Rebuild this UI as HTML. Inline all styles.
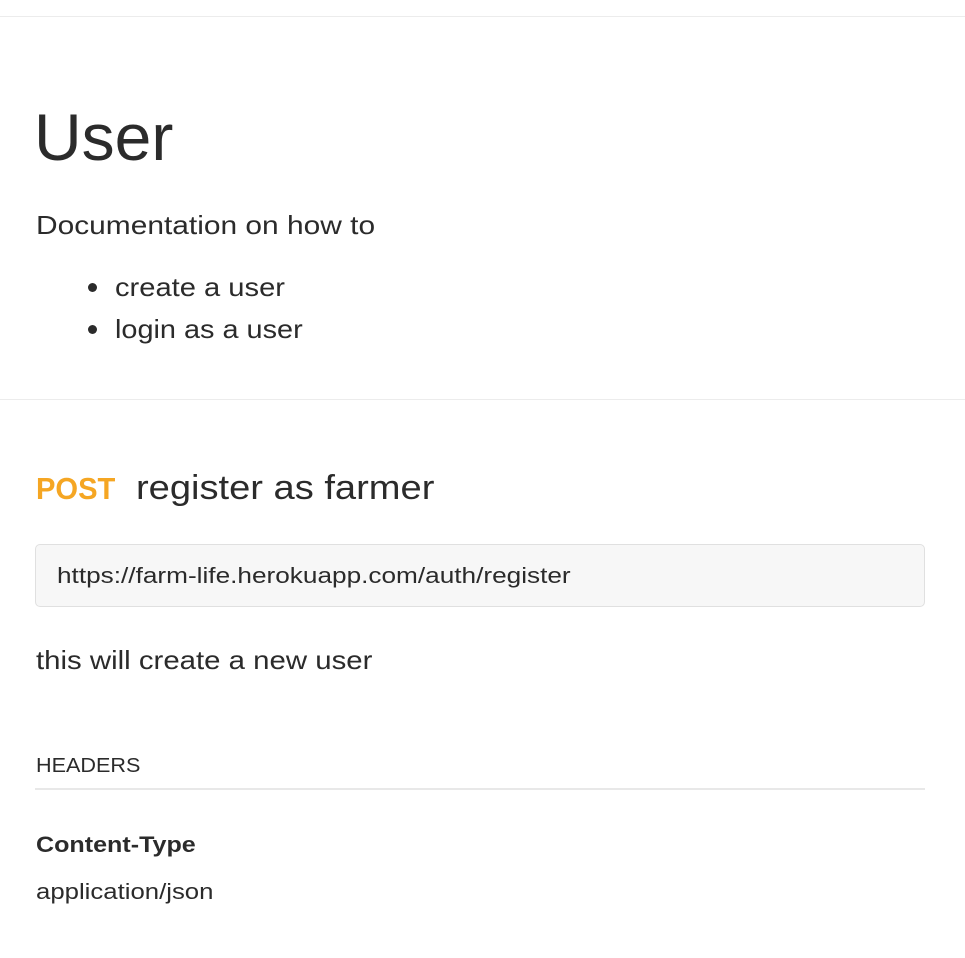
<!DOCTYPE html>
<html><head><meta charset="utf-8"><style>
body{margin:0;width:965px;height:958px;background:#fff;position:relative;overflow:hidden;font-family:"Liberation Sans",sans-serif;color:#2b2b2b}
.t{position:absolute;line-height:1;white-space:nowrap;transform-origin:0 50%}
.hr{position:absolute;left:0;width:965px;height:1px;background:#ececec}
.dot{position:absolute;width:9px;height:9px;border-radius:50%;background:#2b2b2b}
</style></head><body>
<div class="hr" style="top:16px"></div>
<div class="t" style="left:34px;top:104px;font-size:66px">User</div>
<div class="t" style="left:36px;top:212px;font-size:26px;transform:scaleX(1.15)">Documentation on how to</div>
<div class="dot" style="left:88px;top:283px"></div>
<div class="t" style="left:115px;top:274px;font-size:26px;transform:scaleX(1.12)">create a user</div>
<div class="dot" style="left:88px;top:325px"></div>
<div class="t" style="left:115px;top:316px;font-size:26px;transform:scaleX(1.11)">login as a user</div>
<div class="hr" style="top:399px"></div>
<div class="t" style="left:36px;top:473px;font-size:31px;font-weight:bold;color:#f5a623;transform:scaleX(0.94)">POST</div>
<div class="t" style="left:136px;top:471px;font-size:34px;transform:scaleX(1.12)">register as farmer</div>
<div style="position:absolute;left:35px;top:544px;width:888px;height:61px;border:1px solid #e0e0e0;border-radius:5px;background:#f7f7f7"></div>
<div class="t" style="left:57px;top:565px;font-size:22px;transform:scaleX(1.19)">https://farm-life.herokuapp.com/auth/register</div>
<div class="t" style="left:36px;top:647px;font-size:26px;transform:scaleX(1.13)">this will create a new user</div>
<div class="t" style="left:36px;top:756px;font-size:20px;transform:scaleX(1.08)">HEADERS</div>
<div style="position:absolute;left:35px;top:788px;width:890px;height:2px;background:#e8e8e8"></div>
<div class="t" style="left:36px;top:834px;font-size:22px;font-weight:bold;transform:scaleX(1.14)">Content-Type</div>
<div class="t" style="left:36px;top:881px;font-size:22px;transform:scaleX(1.17)">application/json</div>
</body></html>
